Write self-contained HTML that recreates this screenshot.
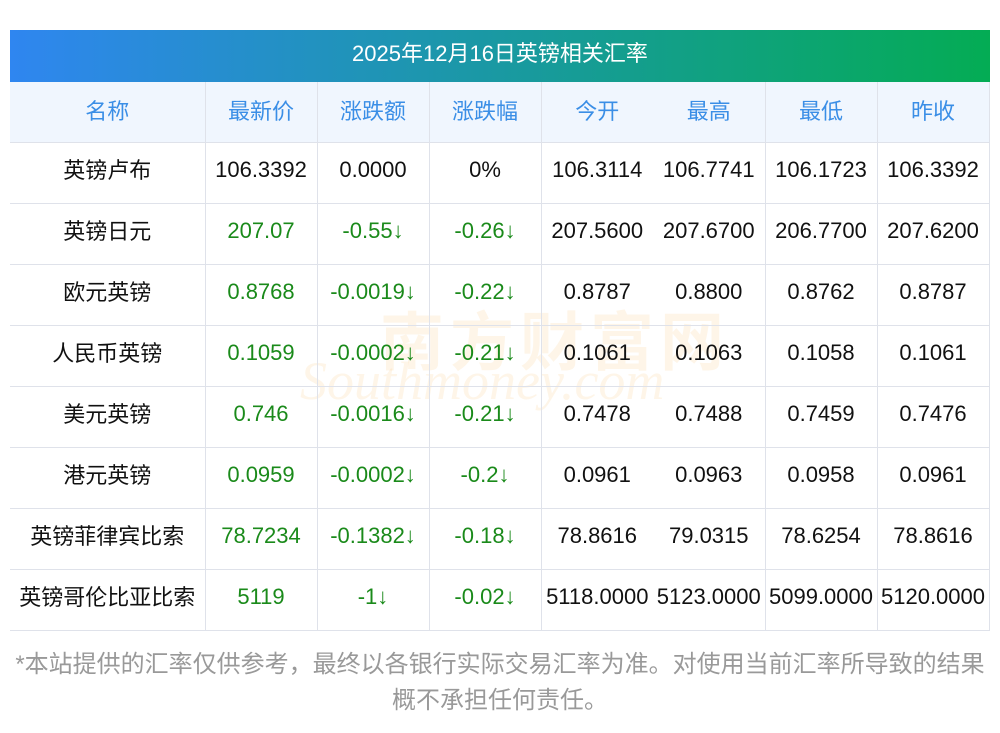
<!DOCTYPE html>
<html><head><meta charset="utf-8"><style>
*{margin:0;padding:0;box-sizing:border-box}
body{width:1000px;height:733px;background:#fff;font-family:"Liberation Sans","Noto Sans CJK SC",sans-serif;position:relative;overflow:hidden}
.title{position:absolute;left:10px;top:30px;width:980px;height:52px;background:linear-gradient(90deg,#2f86f0,#04ac54);color:#fff;font-size:22px;text-align:center;line-height:48px}
table{position:absolute;left:10px;top:82px;border-collapse:collapse;width:979px;table-layout:fixed}
td,th{height:61px;text-align:center;font-size:22px;font-weight:normal;border-bottom:1px solid #dfe2ea;border-right:1px solid #dfe2ea;color:#111;white-space:nowrap;padding:0 0 6px 0;line-height:1}
th{background:#f0f6fe;color:#3a8ee6;height:60px}
th span{position:relative;top:3px}
td.c span{position:relative;top:1px}
.nb{border-right:none}
.g{color:#1a8a1a}
.wm{position:absolute;left:380px;top:292px;color:rgba(250,190,110,0.16);font-size:64px;font-weight:bold;letter-spacing:6px}
.wm2{position:absolute;left:300px;top:350px;color:rgba(250,190,110,0.16);font-size:54px;font-style:italic;font-family:"Liberation Serif",serif}
.foot{position:absolute;left:0;top:647px;width:1000px;text-align:center;color:#999;font-size:24px;line-height:36px}
</style></head><body>
<div class="title">2025年12月16日英镑相关汇率</div>
<div class="wm">南方财富网</div>
<div class="wm2">Southmoney.com</div>
<table>
<colgroup><col style="width:195px"><col style="width:112px"><col style="width:112px"><col style="width:112px"><col style="width:112px"><col style="width:112px"><col style="width:112px"><col style="width:112px"></colgroup>
<tr><th><span>名称</span></th><th><span>最新价</span></th><th><span>涨跌额</span></th><th><span>涨跌幅</span></th><th class="nb"><span>今开</span></th><th><span>最高</span></th><th><span>最低</span></th><th><span>昨收</span></th></tr>
<tr><td class="c"><span>英镑卢布</span></td><td>106.3392</td><td>0.0000</td><td>0%</td><td class="nb">106.3114</td><td>106.7741</td><td>106.1723</td><td>106.3392</td></tr>
<tr><td class="c"><span>英镑日元</span></td><td class="g">207.07</td><td class="g">-0.55↓</td><td class="g">-0.26↓</td><td class="nb">207.5600</td><td>207.6700</td><td>206.7700</td><td>207.6200</td></tr>
<tr><td class="c"><span>欧元英镑</span></td><td class="g">0.8768</td><td class="g">-0.0019↓</td><td class="g">-0.22↓</td><td class="nb">0.8787</td><td>0.8800</td><td>0.8762</td><td>0.8787</td></tr>
<tr><td class="c"><span>人民币英镑</span></td><td class="g">0.1059</td><td class="g">-0.0002↓</td><td class="g">-0.21↓</td><td class="nb">0.1061</td><td>0.1063</td><td>0.1058</td><td>0.1061</td></tr>
<tr><td class="c"><span>美元英镑</span></td><td class="g">0.746</td><td class="g">-0.0016↓</td><td class="g">-0.21↓</td><td class="nb">0.7478</td><td>0.7488</td><td>0.7459</td><td>0.7476</td></tr>
<tr><td class="c"><span>港元英镑</span></td><td class="g">0.0959</td><td class="g">-0.0002↓</td><td class="g">-0.2↓</td><td class="nb">0.0961</td><td>0.0963</td><td>0.0958</td><td>0.0961</td></tr>
<tr><td class="c"><span>英镑菲律宾比索</span></td><td class="g">78.7234</td><td class="g">-0.1382↓</td><td class="g">-0.18↓</td><td class="nb">78.8616</td><td>79.0315</td><td>78.6254</td><td>78.8616</td></tr>
<tr><td class="c"><span>英镑哥伦比亚比索</span></td><td class="g">5119</td><td class="g">-1↓</td><td class="g">-0.02↓</td><td class="nb">5118.0000</td><td>5123.0000</td><td>5099.0000</td><td>5120.0000</td></tr>
</table>
<div class="foot">*本站提供的汇率仅供参考，最终以各银行实际交易汇率为准。对使用当前汇率所导致的结果<br>概不承担任何责任。</div>
</body></html>
